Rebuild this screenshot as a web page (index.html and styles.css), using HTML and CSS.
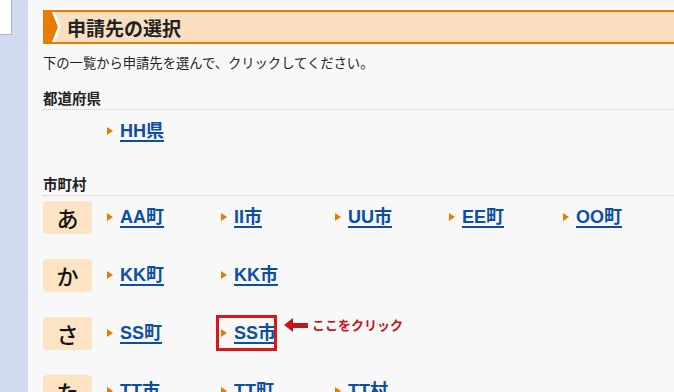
FILE: index.html
```html
<!DOCTYPE html>
<html lang="ja">
<head>
  <meta charset="UTF-8">
  <title>申請先の選択</title>
  <link rel="stylesheet" href="styles.css">
</head>
<body>
  <div class="page">
    <!-- Side navigation strip -->
    <div class="side">
      <div class="side-box"></div>
    </div>

    <!-- Main content -->
    <div class="main">
      <h2 class="title">
        <svg class="title-mark" width="20" height="30" viewBox="0 0 20 30">
          <polygon points="0,0 9,0 15,15 9,30 0,30" fill="#e97b00"/>
          <polygon points="9,0 12,0 18,15 12,30 9,30 15,15" fill="#ffffff"/>
        </svg>
        申請先の選択
      </h2>

      <p class="lead">下の一覧から申請先を選んで、クリックしてください。</p>

      <h3 class="area">都道府県</h3>
      <ul class="links pref">
        <li><a href="#">HH県</a></li>
      </ul>

      <h3 class="area city">市町村</h3>
      <div class="row">
        <div class="kana">あ</div>
        <ul class="links">
          <li><a href="#">AA町</a></li>
          <li><a href="#">II市</a></li>
          <li><a href="#">UU市</a></li>
          <li><a href="#">EE町</a></li>
          <li><a href="#">OO町</a></li>
        </ul>
      </div>
      <div class="row">
        <div class="kana">か</div>
        <ul class="links">
          <li><a href="#">KK町</a></li>
          <li><a href="#">KK市</a></li>
        </ul>
      </div>
      <div class="row">
        <div class="kana">さ</div>
        <ul class="links">
          <li><a href="#">SS町</a></li>
          <li class="marked">
            <a href="#">SS市</a>
            <span class="note"><span class="note-arrow"></span>ここをクリック</span>
          </li>
        </ul>
      </div>
      <div class="row">
        <div class="kana">た</div>
        <ul class="links">
          <li><a href="#">TT市</a></li>
          <li><a href="#">TT町</a></li>
          <li><a href="#">TT村</a></li>
        </ul>
      </div>
    </div>
  </div>
</body>
</html>
```

FILE: styles.css
```css
body {
  margin: 0;
  background-color: #f8f8f8;
  color: #222222;
  font-family: "Liberation Sans", "Noto Sans CJK JP", sans-serif;
  overflow: hidden;
}
.page {
  display: flex;
  min-height: 392px;
}
.side {
  width: 28px;
  flex-shrink: 0;
  background-color: #d2daf0;
}
.side-box {
  width: 11px;
  height: 34px;
  background-color: #ffffff;
  border-right: 1px solid #a9b1d6;
  border-bottom: 1px solid #a9b1d6;
}
.main {
  flex: 1;
  padding: 10px 0 0 15px;
}

/* Heading */
.title {
  display: flex;
  align-items: center;
  margin: 0;
  height: 30px;
  border-top: 2px solid #e97b00;
  border-bottom: 2px solid #e97b00;
  background-color: #f9dfc0;
  font-family: "Noto Sans CJK JP", sans-serif;
  font-size: 19px;
  font-weight: bold;
  color: #222222;
}
.title-mark {
  margin-right: 4px;
}

.lead {
  margin: 9px 0 0;
  font-family: "Noto Sans CJK JP", sans-serif;
  font-size: 13.3px;
  line-height: 20px;
}

/* Section labels */
.area {
  margin: 15px 0 0;
  padding-bottom: 1px;
  font-family: "Noto Sans CJK JP", sans-serif;
  font-size: 14.5px;
  line-height: 20px;
  border-bottom: 1px dotted #cccccc;
}
.area.city {
  margin-top: 30px;
}

/* Link lists */
.links {
  display: flex;
  margin: 0;
  padding: 0;
  list-style: none;
}
.links li {
  position: relative;
  width: 114px;
  padding-left: 13px;
  box-sizing: border-box;
  line-height: 24px;
}
.links li::before {
  content: "";
  position: absolute;
  left: 0;
  top: 8px;
  border-left: 6px solid #e97b00;
  border-top: 4px solid transparent;
  border-bottom: 4px solid transparent;
}
.links a {
  color: #0b4ea2;
  font-size: 18px;
  font-weight: bold;
  text-decoration: underline;
  text-decoration-thickness: 2px;
  text-underline-offset: 3px;
}
.pref {
  margin: 9px 0 0 64px;
}

/* Kana rows */
.row {
  display: flex;
  align-items: center;
  margin-top: 25px;
}
.city + .row {
  margin-top: 5px;
}
.kana {
  width: 49px;
  height: 33px;
  margin-right: 15px;
  border-radius: 4px;
  background-color: #fbe3c4;
  font-family: "Noto Sans CJK JP", sans-serif;
  font-size: 22px;
  font-weight: 500;
  line-height: 33px;
  text-align: center;
  color: #111111;
}

/* Annotation */
.marked::after {
  content: "";
  position: absolute;
  left: -5px;
  top: -6px;
  width: 55px;
  height: 30px;
  border: 3px solid #d81818;
}
.note {
  position: absolute;
  left: 63px;
  top: -8px;
  display: flex;
  align-items: center;
  white-space: nowrap;
  font-family: "Noto Sans CJK JP", sans-serif;
  font-size: 13px;
  font-weight: bold;
  color: #c4141c;
}
.note-arrow {
  position: relative;
  width: 15px;
  height: 5px;
  margin: 0 4px 0 9px;
  background-color: #c4141c;
}
.note-arrow::before {
  content: "";
  position: absolute;
  left: -9px;
  top: -5px;
  border-right: 9px solid #c4141c;
  border-top: 7.5px solid transparent;
  border-bottom: 7.5px solid transparent;
}
```
